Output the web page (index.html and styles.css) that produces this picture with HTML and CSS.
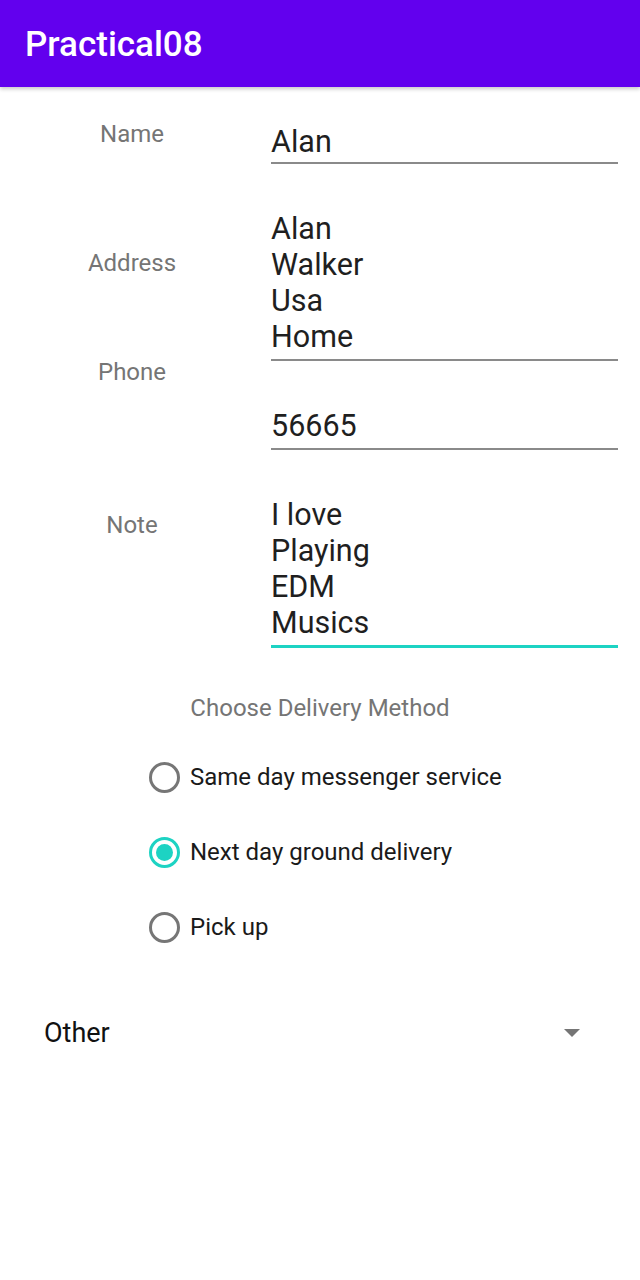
FILE: index.html
```html
<!DOCTYPE html>
<html>
<head>
<meta charset="utf-8">
<title>Practical08</title>
<link rel="stylesheet" href="styles.css">
</head>
<body>
<header class="appbar">Practical08</header>
<main class="content">
  <section class="form">
    <div class="labels">
      <div class="label label-name">Name</div>
      <div class="label label-address">Address</div>
      <div class="label label-phone">Phone</div>
      <div class="label label-note">Note</div>
    </div>
    <div class="fields">
      <div class="field field-first">Alan</div>
      <div class="field">Alan<br>Walker<br>Usa<br>Home</div>
      <div class="field">56665</div>
      <div class="field field-focused">I love<br>Playing<br>EDM<br>Musics</div>
    </div>
  </section>

  <section class="delivery">
    <div class="delivery-title">Choose Delivery Method</div>
    <div class="radios">
      <div class="radio-row"><span class="radio"></span><span class="radio-text">Same day messenger service</span></div>
      <div class="radio-row"><span class="radio radio-checked"></span><span class="radio-text">Next day ground delivery</span></div>
      <div class="radio-row"><span class="radio"></span><span class="radio-text">Pick up</span></div>
    </div>
  </section>

  <section class="spinner">
    <span class="spinner-text">Other</span>
    <span class="spinner-arrow"></span>
  </section>
</main>
</body>
</html>
```
FILE: styles.css
```css
* { box-sizing: border-box; }
html, body { margin: 0; padding: 0; background: #ffffff; }
body {
  width: 640px;
  height: 1280px;
  font-family: Roboto, "Noto Sans", sans-serif;
  overflow: hidden;
}
.appbar {
  height: 87px;
  background: #6200ee;
  color: #ffffff;
  font-size: 35px;
  font-weight: 500;
  line-height: 90px;
  padding-left: 25px;
  box-shadow: 0 2px 4px rgba(0,0,0,0.22);
  position: relative;
}
.form {
  display: flex;
  padding-top: 34px;
}
.labels {
  width: 264px;
  display: flex;
  flex-direction: column;
  align-items: center;
}
.label {
  font-size: 24px;
  line-height: 26px;
  color: #757575;
}
.label-address { margin-top: 103px; }
.label-phone { margin-top: 83px; }
.label-note { margin-top: 127px; }
.fields {
  margin-left: 7px;
  width: 347px;
  display: flex;
  flex-direction: column;
}
.field {
  font-size: 30.5px;
  line-height: 36px;
  color: #1f1f1f;
  padding-bottom: 4px;
  border-bottom: 2px solid #8a8a8a;
  margin-top: 47px;
}
.field-first { margin-top: 3px; padding-bottom: 2px; }
.field-focused { border-bottom: 3px solid #1dd3c3; }

.delivery {
  display: flex;
  flex-direction: column;
  align-items: center;
  margin-top: 47px;
}
.delivery-title {
  font-size: 24px;
  line-height: 26px;
  color: #757575;
}
.radios {
  margin-top: 41px;
  display: flex;
  flex-direction: column;
  gap: 45px;
  align-self: flex-start;
  margin-left: 149px;
}
.radio-row {
  display: flex;
  align-items: center;
  height: 30px;
}
.radio {
  width: 31px;
  height: 31px;
  border-radius: 50%;
  border: 3px solid #767676;
  display: flex;
  align-items: center;
  justify-content: center;
}
.radio-checked { border-color: #1dd3c3; }
.radio-checked::after {
  content: "";
  width: 17px;
  height: 17px;
  border-radius: 50%;
  background: #1dd3c3;
}
.radio-text {
  margin-left: 10px;
  font-size: 24px;
  color: #1a1a1a;
}
.spinner {
  margin-top: 71px;
  display: flex;
  align-items: center;
  justify-content: space-between;
  padding: 0 60px 0 44px;
  height: 40px;
}
.spinner-text {
  font-size: 27px;
  color: #111111;
}
.spinner-arrow {
  width: 0;
  height: 0;
  border-left: 8px solid transparent;
  border-right: 8px solid transparent;
  border-top: 8px solid #757575;
}
```
